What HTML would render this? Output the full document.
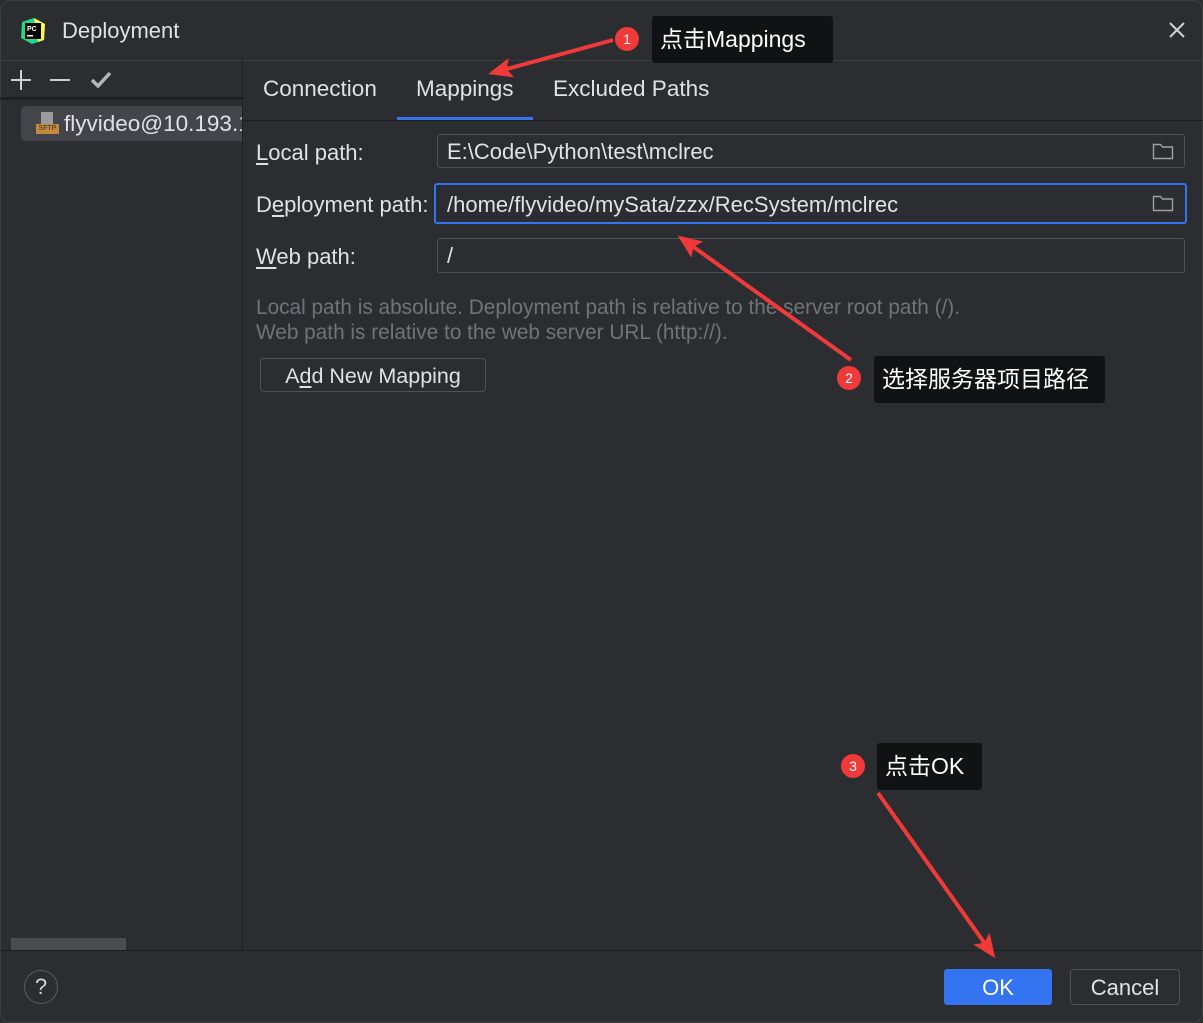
<!DOCTYPE html>
<html><head><meta charset="utf-8"><style>
*{margin:0;padding:0;box-sizing:border-box}
body{width:1203px;height:1023px;background:#2b2d30;font-family:"Liberation Sans","Noto Sans CJK SC",sans-serif;color:#dfe1e5;position:relative;overflow:hidden;font-size:22px}
.a{position:absolute;white-space:nowrap}
.hl{position:absolute;background:#1e1f22}
.inp{position:absolute;border:1px solid #4e5157;border-radius:3px;padding-left:9px;line-height:33px;font-size:22px}
.lbl{position:absolute;font-size:22px;color:#dfe1e5}
u{text-decoration:underline;text-underline-offset:3px}
.tip{position:absolute;background:#111214;color:#fff;border-radius:3px;font-size:23px;padding-left:8px}
.badge{position:absolute;width:24px;height:24px;border-radius:50%;background:#f03a3a;color:#fff;font-size:14px;text-align:center;line-height:24px}
</style></head><body>
<div class="a" style="left:0;top:0;width:1203px;height:1023px;border:1px solid #3c3e42;border-radius:10px"></div>
<svg class="a" style="left:20px;top:18px" width="26" height="26" viewBox="0 0 26 26"><polygon points="2,4 14,0 25,6 24,22 12,26 1,20" fill="#21d789"/><polygon points="14,0 25,6 24,22 18,24" fill="#fcf84a"/><rect x="5" y="5" width="16" height="16" fill="#000"/><text x="7" y="13" font-size="7" fill="#fff" font-family="Liberation Sans" font-weight="bold">PC</text><rect x="7" y="17" width="6" height="1.5" fill="#fff"/></svg>
<div class="a" style="left:62px;top:18px;font-size:22px">Deployment</div>
<svg class="a" style="left:1168px;top:21px" width="18" height="18"><path d="M2 2L16 16M16 2L2 16" stroke="#cfd1d5" stroke-width="2"/></svg>
<div class="hl" style="left:0;top:60px;width:1203px;height:1px;background:#3a3c40"></div>
<svg class="a" style="left:10px;top:68px" width="110" height="24"><path d="M11 2V22M1 12H21" stroke="#ced0d6" stroke-width="2"/><path d="M40 12H60" stroke="#ced0d6" stroke-width="2"/><path d="M82 12L88 18L100 5" stroke="#b5b7bd" stroke-width="3.5" fill="none"/></svg>
<div class="hl" style="left:0;top:97px;width:242px;height:3px"></div>
<div class="a" style="left:21px;top:106px;width:221px;height:35px;background:#43454a;border-radius:5px 0 0 5px"></div>
<div class="a" style="left:36px;top:112px;width:23px;height:23px"><div class="a" style="left:5px;top:0;width:12px;height:12px;background:#9a9b9f"></div><div class="a" style="left:0;top:12px;width:23px;height:10px;background:#c08b3c;font-size:7px;color:#333;line-height:10px;text-align:center">SFTP</div></div>
<div class="a" style="left:64px;top:111px;font-size:22.5px;width:178px;overflow:hidden">flyvideo@10.193.1</div>
<div class="a" style="left:11px;top:938px;width:115px;height:12px;background:#4a4c50"></div>
<div class="hl" style="left:242px;top:60px;width:1px;height:890px;background:#1e1f22"></div>
<div class="a" style="left:263px;top:76px;font-size:22.5px">Connection</div>
<div class="a" style="left:416px;top:76px;font-size:22.5px">Mappings</div>
<div class="a" style="left:553px;top:76px;font-size:22.5px">Excluded Paths</div>
<div class="hl" style="left:243px;top:120px;width:960px;height:1px;background:#1e1f22"></div>
<div class="a" style="left:397px;top:117px;width:136px;height:3px;background:#3574f0"></div>
<div class="lbl" style="left:256px;top:140px"><u>L</u>ocal path:</div>
<div class="lbl" style="left:256px;top:192px">D<u>e</u>ployment path:</div>
<div class="lbl" style="left:256px;top:244px"><u>W</u>eb path:</div>
<div class="inp" style="left:437px;top:134px;width:748px;height:34px">E:\Code\Python\test\mclrec</div>
<div class="inp" style="left:434px;top:183px;width:753px;height:41px;border:2px solid #3574f0;line-height:39px;padding-left:11px">/home/flyvideo/mySata/zzx/RecSystem/mclrec</div>
<div class="inp" style="left:437px;top:238px;width:748px;height:35px">/</div>
<svg class="a" style="left:1152px;top:142px" width="22" height="18" viewBox="0 0 22 18"><path d="M1.5 2.5h7l2 2.5h10v11.5h-19z" fill="none" stroke="#9da0a8" stroke-width="1.4"/></svg>
<svg class="a" style="left:1152px;top:194px" width="22" height="18" viewBox="0 0 22 18"><path d="M1.5 2.5h7l2 2.5h10v11.5h-19z" fill="none" stroke="#9da0a8" stroke-width="1.4"/></svg>
<div class="a" style="left:256px;top:295px;font-size:20.8px;color:#6f737a;line-height:25px">Local path is absolute. Deployment path is relative to the server root path (/).<br>Web path is relative to the web server URL (http://).</div>
<div class="a" style="left:260px;top:358px;width:226px;height:34px;border:1px solid #4e5157;border-radius:4px;text-align:center;line-height:34px;font-size:21.5px">A<u>d</u>d New Mapping</div>
<div class="hl" style="left:0;top:950px;width:1203px;height:1px"></div>
<div class="a" style="left:24px;top:970px;width:34px;height:34px;border:1px solid #5a5d63;border-radius:50%;text-align:center;line-height:32px;font-size:22px;color:#cfd1d5">?</div>
<div class="a" style="left:944px;top:969px;width:108px;height:36px;background:#3574f0;border-radius:3px;text-align:center;line-height:38px;font-size:22px;color:#fff">OK</div>
<div class="a" style="left:1070px;top:969px;width:110px;height:36px;border:1px solid #4e5157;border-radius:4px;text-align:center;line-height:36px;font-size:22px">Cancel</div>
<svg class="a" style="left:0;top:0" width="1203" height="1023">
<defs><marker id="h" markerWidth="6" markerHeight="5" refX="5" refY="2.5" orient="auto"><path d="M0 0L6 2.5L0 5L1.2 2.5z" fill="#f03a3a"/></marker></defs>
<line x1="613" y1="40" x2="492" y2="73" stroke="#f03a3a" stroke-width="4" marker-end="url(#h)"/>
<line x1="851" y1="360" x2="681" y2="238" stroke="#f03a3a" stroke-width="4" marker-end="url(#h)"/>
<line x1="878" y1="793" x2="993" y2="955" stroke="#f03a3a" stroke-width="4" marker-end="url(#h)"/>
</svg>
<div class="badge" style="left:615px;top:27px">1</div>
<div class="tip" style="left:652px;top:16px;width:181px;height:47px;line-height:47px">点击Mappings</div>
<div class="badge" style="left:837px;top:366px">2</div>
<div class="tip" style="left:874px;top:356px;width:231px;height:47px;line-height:47px">选择服务器项目路径</div>
<div class="badge" style="left:841px;top:754px">3</div>
<div class="tip" style="left:877px;top:743px;width:105px;height:47px;line-height:47px">点击OK</div>
</body></html>
